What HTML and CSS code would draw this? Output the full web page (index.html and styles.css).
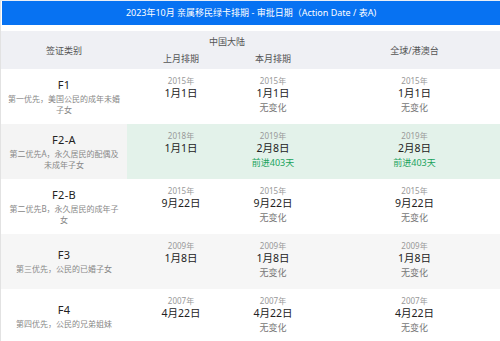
FILE: index.html
```html
<!DOCTYPE html>
<html lang="zh-CN">
<head>
  <meta charset="UTF-8">
  <title>2023年10月 亲属移民绿卡排期</title>
  <link rel="stylesheet" href="styles.css">
</head>
<body>
  <div class="board">
    <div class="title">2023年10月 亲属移民绿卡排期 - 审批日期（Action Date / 表A)</div>

    <div class="thead">
      <div class="th th-cat">签证类别</div>
      <div class="th th-cn">中国大陆</div>
      <div class="th th-prev">上月排期</div>
      <div class="th th-cur">本月排期</div>
      <div class="th th-world">全球/港澳台</div>
    </div>

    <div class="row">
      <div class="cat">
        <div class="cat-name">F1</div>
        <div class="cat-desc">第一优先，美国公民的成年未婚子女</div>
      </div>
      <div class="cell"><span class="year">2015年</span><span class="date">1月1日</span></div>
      <div class="cell"><span class="year">2015年</span><span class="date">1月1日</span><span class="status">无变化</span></div>
      <div class="cell cell-world"><span class="year">2015年</span><span class="date">1月1日</span><span class="status">无变化</span></div>
    </div>

    <div class="row row-moved">
      <div class="cat">
        <div class="cat-name">F2-A</div>
        <div class="cat-desc">第二优先A，永久居民的配偶及未成年子女</div>
      </div>
      <div class="cell"><span class="year">2018年</span><span class="date">1月1日</span></div>
      <div class="cell"><span class="year">2019年</span><span class="date">2月8日</span><span class="status up">前进403天</span></div>
      <div class="cell cell-world"><span class="year">2019年</span><span class="date">2月8日</span><span class="status up">前进403天</span></div>
    </div>

    <div class="row">
      <div class="cat">
        <div class="cat-name">F2-B</div>
        <div class="cat-desc">第二优先B，永久居民的成年子女</div>
      </div>
      <div class="cell"><span class="year">2015年</span><span class="date">9月22日</span></div>
      <div class="cell"><span class="year">2015年</span><span class="date">9月22日</span><span class="status">无变化</span></div>
      <div class="cell cell-world"><span class="year">2015年</span><span class="date">9月22日</span><span class="status">无变化</span></div>
    </div>

    <div class="row row-alt">
      <div class="cat">
        <div class="cat-name">F3</div>
        <div class="cat-desc">第三优先，公民的已婚子女</div>
      </div>
      <div class="cell"><span class="year">2009年</span><span class="date">1月8日</span></div>
      <div class="cell"><span class="year">2009年</span><span class="date">1月8日</span><span class="status">无变化</span></div>
      <div class="cell cell-world"><span class="year">2009年</span><span class="date">1月8日</span><span class="status">无变化</span></div>
    </div>

    <div class="row">
      <div class="cat">
        <div class="cat-name">F4</div>
        <div class="cat-desc">第四优先，公民的兄弟姐妹</div>
      </div>
      <div class="cell"><span class="year">2007年</span><span class="date">4月22日</span></div>
      <div class="cell"><span class="year">2007年</span><span class="date">4月22日</span><span class="status">无变化</span></div>
      <div class="cell cell-world"><span class="year">2007年</span><span class="date">4月22日</span><span class="status">无变化</span></div>
    </div>
  </div>
</body>
</html>
```

FILE: styles.css
```css
:root {
  --blue: #0772f2;
  --head-bg: #eff0f4;
  --alt-bg: #f6f6f6;
  --moved-bg: #e3f2ea;
  --green: #1aa35c;
  --text: #222;
  --muted: #999;
}

* {
  box-sizing: border-box;
  margin: 0;
  padding: 0;
}

html, body {
  height: 100%;
  overflow: hidden;
}

body {
  background: #fff;
  color: var(--text);
  font-family: "Noto Sans", "Noto Sans CJK SC", sans-serif;
}

.board {
  width: 500px;
  border-top: 1px solid #e9eef6;
  border-left: 1px solid #e2e2e2;
}

.title {
  height: 24px;
  line-height: 24px;
  margin-left: 1px;
  background: var(--blue);
  color: #fff;
  font-size: 9px;
  text-align: center;
}

/* table head */
.thead {
  display: grid;
  grid-template-columns: 126px 108px 76px 1fr;
  grid-template-rows: 19px 19px;
  margin-top: 6px;
  background: var(--head-bg);
  color: #555;
  font-size: 9px;
}

.th {
  display: flex;
  align-items: center;
  justify-content: center;
}

.th-cat { grid-row: 1 / 3; grid-column: 1; }
.th-cn { grid-row: 1; grid-column: 2 / 4; padding-left: 16px; padding-top: 2px; }
.th-prev { grid-row: 2; grid-column: 2; padding-bottom: 2px; }
.th-cur { grid-row: 2; grid-column: 3; padding-bottom: 2px; }
.th-world { grid-row: 1 / 3; grid-column: 4; padding-left: 18px; }

/* rows */
.row {
  display: grid;
  grid-template-columns: 126px 108px 76px 1fr;
  height: 55px;
}

.row-alt {
  background: var(--alt-bg);
}

.row-moved .cat {
  background: #f4f4f4;
}

.row-moved .cell {
  background: var(--moved-bg);
}

.cat {
  display: flex;
  flex-direction: column;
  justify-content: center;
  align-items: center;
  padding: 0 6px;
  text-align: center;
}

.cat-name {
  font-size: 11px;
  line-height: 14px;
  letter-spacing: 0.3px;
  margin-bottom: 2px;
}

.cat-desc {
  font-size: 8px;
  line-height: 10.5px;
  color: #888;
}

.cell {
  display: flex;
  flex-direction: column;
  align-items: center;
  padding-top: 7px;
}

.cell-world {
  padding-left: 18px;
}

.year {
  font-size: 8px;
  line-height: 10px;
  color: var(--muted);
}

.date {
  font-size: 10.5px;
  line-height: 13px;
  margin-top: 1px;
}

.status {
  font-size: 9px;
  line-height: 13px;
  margin-top: 1px;
  color: #777;
}

.status.up {
  color: var(--green);
}
```
